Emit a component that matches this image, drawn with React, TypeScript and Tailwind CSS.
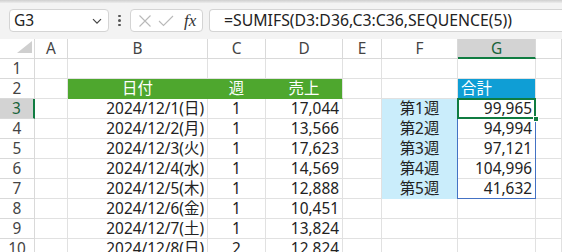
import React from 'react';

// --- Sheet data ---
const COLS = ['A', 'B', 'C', 'D', 'E', 'F', 'G', 'H'];

type Row = { date?: string; week?: string; sales?: string; label?: string; total?: string };

const ROWS: Row[] = [
  {},
  {},
  { date: '2024/12/1(日)', week: '1', sales: '17,044', label: '第1週', total: '99,965' },
  { date: '2024/12/2(月)', week: '1', sales: '13,566', label: '第2週', total: '94,994' },
  { date: '2024/12/3(火)', week: '1', sales: '17,623', label: '第3週', total: '97,121' },
  { date: '2024/12/4(水)', week: '1', sales: '14,569', label: '第4週', total: '104,996' },
  { date: '2024/12/5(木)', week: '1', sales: '12,888', label: '第5週', total: '41,632' },
  { date: '2024/12/6(金)', week: '1', sales: '10,451' },
  { date: '2024/12/7(土)', week: '1', sales: '13,824' },
  { date: '2024/12/8(日)', week: '2', sales: '12,824' },
];

// base cell without border colour, so fills can set their own
const base = 'h-5 border-r border-b px-[3px] flex items-end pb-[1px] leading-[17px] whitespace-nowrap overflow-hidden';
const cell = `${base} border-[#e1e1e1]`;
const green = `${base} bg-[#4ea72e] border-[#4ea72e] text-white justify-center`;

const FormulaBar: React.FC = () => (
  <div className="h-[39px] bg-[#f3f3f3] flex flex-col">
    <div className="h-[3px] bg-gradient-to-b from-[#cfcfcf] to-[#ececec]" />
    <div className="flex items-center pt-[6px] pl-[9px]">
      {/* name box */}
      <div className="w-[100px] h-[23px] bg-white border border-[#d4d4d4] rounded-[4px] flex items-center justify-between pl-[4px] pr-[6px]">
        <span className="text-[15.5px] text-[#222]">G3</span>
        <svg width="10" height="7" viewBox="0 0 10 7" className="mt-[1px]">
          <path d="M1 1.2 L5 5.2 L9 1.2" fill="none" stroke="#444" strokeWidth="1.2" />
        </svg>
      </div>
      {/* grip */}
      <div className="w-[21px] flex flex-col items-center gap-[2px]">
        <div className="w-[2.5px] h-[2.5px] rounded-full bg-[#555]" />
        <div className="w-[2.5px] h-[2.5px] rounded-full bg-[#555]" />
        <div className="w-[2.5px] h-[2.5px] rounded-full bg-[#555]" />
      </div>
      {/* cancel / enter / fx */}
      <div className="w-[73px] h-[23px] bg-white border border-[#d4d4d4] rounded-[4px] flex items-center pl-[7px]">
        <svg width="14" height="14" viewBox="0 0 14 14">
          <path d="M1.5 1.5 L12.5 12.5 M12.5 1.5 L1.5 12.5" stroke="#b9b9b9" strokeWidth="1.1" />
        </svg>
        <svg width="16" height="14" viewBox="0 0 16 14" className="ml-[6px]">
          <path d="M1 7 L5.5 11.5 L15 2" fill="none" stroke="#b9b9b9" strokeWidth="1.1" />
        </svg>
        <span className="ml-[10px] text-[17px] italic text-[#333] leading-none" style={{ fontFamily: '"Liberation Serif", serif' }}>
          fx
        </span>
      </div>
      {/* formula input */}
      <div className="ml-[6px] flex-1 h-[23px] bg-white border border-[#d4d4d4] rounded-l-[4px] border-r-0 flex items-center pl-[14px]">
        <span className="text-[15.8px] text-[#222]">=SUMIFS(D3:D36,C3:C36,SEQUENCE(5))</span>
      </div>
    </div>
  </div>
);

export default function App() {
  return (
    <div
      className="w-[562px] h-[252px] overflow-hidden bg-white text-[#222] text-[15.4px]"
      style={{ fontFamily: '"Noto Sans", "Noto Sans CJK JP", sans-serif' }}
    >
      <FormulaBar />
      <div className="grid grid-cols-[35px_33px_140px_58px_77px_39px_76px_78px_1fr]">
        {/* column headers */}
        <div className="h-5 border-r border-b border-[#d9d9d9] bg-white relative">
          <svg width="15" height="12" viewBox="0 0 15 12" className="absolute right-[2px] bottom-[5px]">
            <path d="M15 0 L15 12 L0 12 Z" fill="#cfcfcf" />
          </svg>
        </div>
        {COLS.map((c) =>
          c === 'G' ? (
            <div key={c} className="h-5 border-r border-[#d9d9d9] bg-[#d3d3d3] text-[#19633a] border-b-2 border-b-[#107c41] flex justify-center items-center leading-none pt-[1px]">
              {c}
            </div>
          ) : (
            <div key={c} className="h-5 border-r border-b border-[#d9d9d9] bg-white text-[#444] flex justify-center items-center leading-none pt-[1px]">
              {c === 'H' ? '' : c}
            </div>
          )
        )}

        {ROWS.map((r, i) => {
          const n = i + 1;
          const isHead = n === 2;
          const inBlue = n >= 3 && n <= 7;
          return (
            <React.Fragment key={n}>
              {n === 3 ? (
                <div className="h-5 border-b border-[#d9d9d9] border-r-2 border-r-[#107c41] bg-[#d3d3d3] text-[#19633a] flex justify-center items-center leading-none pt-[1px]">
                  {n}
                </div>
              ) : (
                <div className="h-5 border-r border-b border-[#d9d9d9] bg-white text-[#444] flex justify-center items-center leading-none pt-[1px]">
                  {n}
                </div>
              )}
              {/* A */}
              <div className={cell} />
              {/* B */}
              {isHead ? <div className={green}>日付</div> : <div className={`${cell} justify-end`}>{r.date}</div>}
              {/* C */}
              {isHead ? <div className={green}>週</div> : <div className={`${cell} justify-center`}>{r.week}</div>}
              {/* D */}
              {isHead ? (
                <div className={`${base} bg-[#4ea72e] border-r-[#e1e1e1] border-b-[#4ea72e] text-white justify-center`}>売上</div>
              ) : (
                <div className={`${cell} justify-end`}>{r.sales}</div>
              )}
              {/* E */}
              <div className={cell} />
              {/* F */}
              {inBlue ? (
                <div className={`${base} bg-[#caedfb] border-r-[#e1e1e1] border-b-[#caedfb] justify-center`}>{r.label}</div>
              ) : (
                <div className={cell} />
              )}
              {/* G */}
              {isHead ? (
                <div className={`${base} bg-[#0f9ed5] border-r-[#e1e1e1] border-b-[#0f9ed5] text-white justify-start`}>合計</div>
              ) : inBlue ? (
                <div className={`${cell} justify-end relative overflow-visible`}>
                  {n === 3 && (
                    <>
                      <div className="absolute left-[-1px] top-[-1px] right-[-1px] bottom-[-1px] border-2 border-[#107c41] pointer-events-none" />
                      <div className="absolute right-[-4px] bottom-[-4px] w-[6px] h-[6px] bg-[#107c41] border border-white z-10" />
                    </>
                  )}
                  {n !== 3 && (
                    <div className={`absolute left-[-1px] right-[-1px] top-0 bottom-[-1px] border-x border-[#4472c4] ${n === 7 ? 'border-b' : ''} pointer-events-none`} />
                  )}
                  <span className="relative">{r.total}</span>
                </div>
              ) : (
                <div className={cell} />
              )}
              {/* H */}
              <div className={cell} />
            </React.Fragment>
          );
        })}
      </div>
    </div>
  );
}
